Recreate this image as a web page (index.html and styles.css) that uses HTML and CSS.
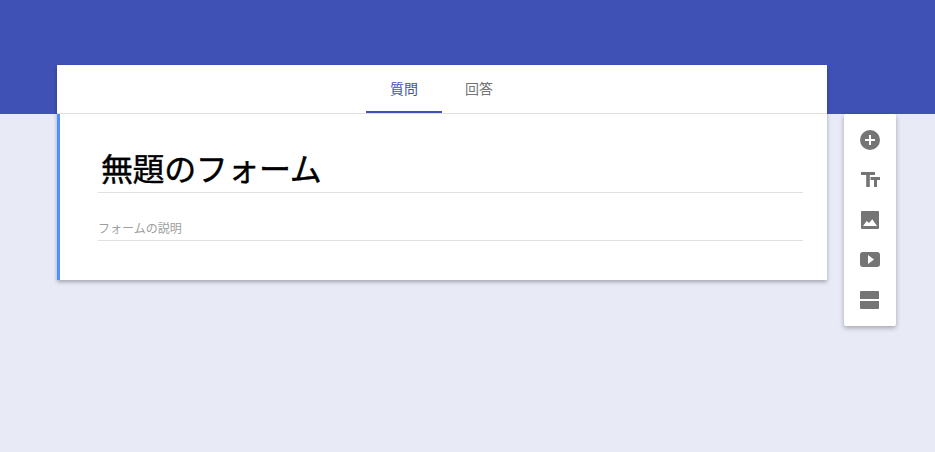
FILE: index.html
```html
<!DOCTYPE html>
<html lang="ja">
<head>
  <title>無題のフォーム</title>
  <meta charset="UTF-8">
  <meta name="viewport" content="width=device-width, initial-scale=1.0">
  <link rel="stylesheet" href="styles.css">
</head>
<body>
  <div class="page">
    <main class="form-column">
      <nav class="tabs">
        <a class="tab tab-active">質問</a>
        <a class="tab">回答</a>
      </nav>
      <section class="form-card">
        <h1 class="form-title">無題のフォーム</h1>
        <p class="form-desc">フォームの説明</p>
      </section>
    </main>

    <aside class="toolbar">
      <svg class="tool" viewBox="0 0 24 24"><path d="M12 2a10 10 0 1 0 0 20 10 10 0 0 0 0-20zm5 11h-4v4h-2v-4H7v-2h4V7h2v4h4v2z"/></svg>
      <svg class="tool" viewBox="0 0 24 24"><path d="M3 4h14v3h-5.200v12H8.200V7H3zM12.500 9H22v3h-3v7h-3v-7h-3.500z"/></svg>
      <svg class="tool" viewBox="0 0 24 24"><path fill-rule="evenodd" d="M4 3h16a1 1 0 0 1 1 1v16a1 1 0 0 1-1 1H4a1 1 0 0 1-1-1V4a1 1 0 0 1 1-1zm1 15h14l-4.700-6.700-3.300 3.700-2.300-2z"/></svg>
      <svg class="tool" viewBox="0 0 24 24"><path fill-rule="evenodd" d="M5 4h14a3 3 0 0 1 3 3v9a3 3 0 0 1-3 3H5a3 3 0 0 1-3-3V7a3 3 0 0 1 3-3zm5 3v9l6-4.500z"/></svg>
      <svg class="tool" viewBox="0 0 24 24"><path d="M3 3h17a1 1 0 0 1 1 1v7H2V4a1 1 0 0 1 1-1zM2 13h19v7a1 1 0 0 1-1 1H3a1 1 0 0 1-1-1z"/></svg>
    </aside>
  </div>
</body>
</html>
```

FILE: styles.css
```css
* {
  box-sizing: border-box;
}
body {
  margin: 0;
  height: 452px;
  overflow: hidden;
  font-family: "Noto Sans CJK JP", Roboto, sans-serif;
  background: linear-gradient(#3f51b5 114px, #e8eaf6 114px);
}
.page {
  display: flex;
  align-items: flex-start;
  gap: 17px;
  padding: 65px 0 0 57px;
}
.form-column {
  width: 770px;
  box-shadow: 0 2px 4px rgba(0, 0, 0, 0.3);
  background-color: #fff;
}
.tabs {
  display: flex;
  justify-content: center;
  height: 49px;
  border-bottom: 1px solid #e0e0e0;
}
.tab {
  display: flex;
  align-items: center;
  justify-content: center;
  width: 76px;
  height: 48px;
  padding: 0 2px 2px 0;
  font-size: 14px;
  color: #757575;
}
.tab-active {
  padding: 0;
  color: #3f51b5;
  border-bottom: 2px solid #3f51b5;
}
.form-card {
  height: 166px;
  padding: 31px 24px 0 38px;
  border-left: 3px solid #4d90fe;
}
.form-title {
  margin: 0;
  height: 48px;
  padding-left: 3px;
  font-size: 32px;
  font-weight: 400;
  letter-spacing: -0.4px;
  line-height: 44px;
  color: #000;
  -webkit-text-stroke: 0.4px #000;
  border-bottom: 1px solid #e0e0e0;
}
.form-desc {
  margin: 25px 0 0;
  height: 23px;
  font-size: 12px;
  line-height: 19px;
  color: #9e9e9e;
  border-bottom: 1px solid #e0e0e0;
}
.toolbar {
  display: flex;
  flex-direction: column;
  align-items: center;
  gap: 16px;
  width: 52px;
  height: 212px;
  margin-top: 49px;
  padding-top: 14px;
  background-color: #fff;
  border-radius: 2px;
  box-shadow: 0 2px 5px rgba(0, 0, 0, 0.3);
}
.tool {
  width: 24px;
  height: 24px;
  fill: #757575;
}
```
